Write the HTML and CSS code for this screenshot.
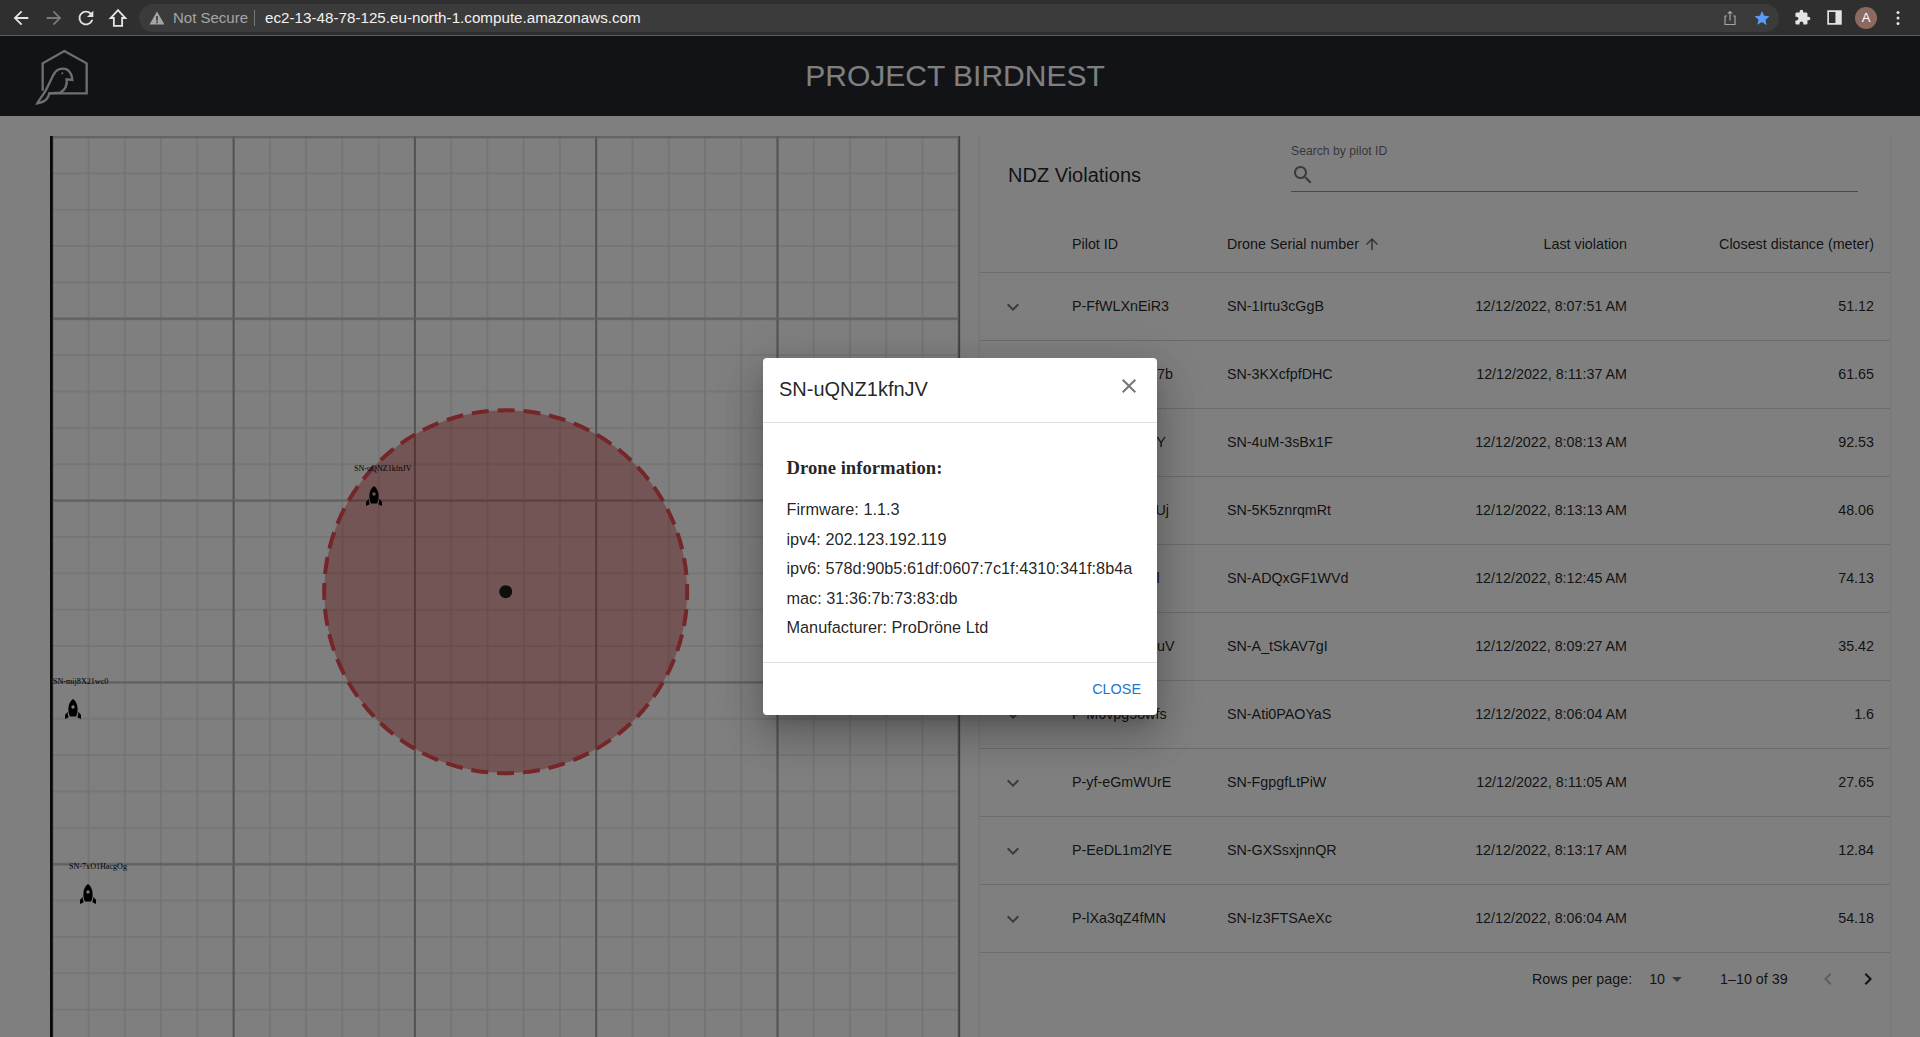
FILE: index.html
```html
<!DOCTYPE html>
<html lang="en">
<head>
  <meta charset="UTF-8">
  <meta name="viewport" content="width=device-width, initial-scale=1.0">
  <title>Project Birdnest</title>
  <link rel="stylesheet" href="styles.css">
</head>
<body>
  <div class="browser">
    <svg class="nav-icon" viewBox="0 0 24 24"><path fill="#e4e4e4" d="M20 11H7.83l5.59-5.59L12 4l-8 8 8 8 1.41-1.41L7.83 13H20v-2z"/></svg>
    <svg class="nav-icon" viewBox="0 0 24 24"><path fill="#7a7a7a" d="M4 11h12.17l-5.59-5.59L12 4l8 8-8 8-1.41-1.41L16.17 13H4v-2z"/></svg>
    <svg class="nav-icon" viewBox="0 0 24 24"><path fill="#e4e4e4" d="M17.65 6.35C16.2 4.9 14.21 4 12 4c-4.42 0-7.99 3.58-7.99 8s3.57 8 7.99 8c3.73 0 6.84-2.55 7.73-6h-2.08c-.82 2.33-3.04 4-5.65 4-3.31 0-6-2.69-6-6s2.69-6 6-6c1.66 0 3.14.69 4.22 1.78L13 11h7V4l-2.35 2.35z"/></svg>
    <svg class="nav-icon home" viewBox="0 0 24 24"><path fill="none" stroke="#e4e4e4" stroke-width="2" d="M12 3.5 4 12h3.5v8.5h9V12H20z"/></svg>
    <div class="address">
      <svg class="warn" viewBox="0 0 16 16"><path fill="#a5a5a5" d="M8 1.5 15.5 14.5H.5z"/><path fill="#3a3a3a" d="M7.2 6h1.6v4.8H7.2zM7.2 11.6h1.6v1.6H7.2z"/></svg>
      <span class="not-secure">Not Secure</span>
      <span class="url">ec2-13-48-78-125.eu-north-1.compute.amazonaws.com</span>
      <svg class="share" viewBox="0 0 16 16"><path fill="none" stroke="#a5a5a5" stroke-width="1.2" d="M5 6H3v8.5h10V6h-2M8 10.5V1.5M5.8 3.6 8 1.5l2.2 2.1"/></svg>
      <svg class="star" viewBox="0 0 24 24"><path fill="#5b9cf6" d="M12 2.5l2.9 6.6 7.1.7-5.4 4.7 1.6 7L12 17.2l-6.2 3.8 1.6-7L2 9.8l7.1-.7z"/></svg>
    </div>
    <svg class="ext puzzle" viewBox="0 0 24 24"><path fill="#e4e4e4" d="M20.5 11H19V7c0-1.1-.9-2-2-2h-4V3.5C13 2.12 11.88 1 10.5 1S8 2.12 8 3.5V5H4c-1.1 0-1.99.9-1.99 2v3.8H3.5c1.49 0 2.7 1.21 2.7 2.7s-1.21 2.7-2.7 2.7H2V20c0 1.1.9 2 2 2h3.8v-1.5c0-1.49 1.21-2.7 2.7-2.7 1.49 0 2.7 1.21 2.7 2.7V22H17c1.1 0 2-.9 2-2v-4h1.5c1.38 0 2.5-1.12 2.5-2.5S21.88 11 20.5 11z"/></svg>
    <svg class="ext panel" viewBox="0 0 16 16"><rect x="1.2" y="1.2" width="13.6" height="13.6" fill="none" stroke="#e4e4e4" stroke-width="1.8"/><rect x="9" y="1" width="6" height="14" fill="#e4e4e4"/></svg>
    <span class="avatar">A</span>
    <svg class="dots" viewBox="0 0 4 16"><circle cx="2" cy="2.5" r="1.5"/><circle cx="2" cy="8" r="1.5"/><circle cx="2" cy="13.5" r="1.5"/></svg>
  </div>

  <div class="app">
    <header class="header">
      <svg class="logo" viewBox="0 0 270 210">
        <path d="M68 152V70L133 33l67 37v90H86"/>
        <path d="M52 190c8-15 18-25 26-40l22-45c8-17 25-23 40-17 10 6 16 17 17 32l-17-2c2 17-5 32-20 40l-32 2c-3 15-10 25-36 30z"/>
        <circle class="logo-eye" cx="127" cy="100" r="3"/>
      </svg>
      <h1>PROJECT BIRDNEST</h1>
    </header>

    <main class="main">
      <section class="map">
        <svg class="radar" width="912" height="901" viewBox="50 136 912 901">
          <defs>
            <pattern id="minor" x="51.3" y="136" width="36.26" height="36.36" patternUnits="userSpaceOnUse">
              <path d="M1 0V36.36" fill="none" stroke="#e6e6e6" stroke-width="1.600"/>
              <path d="M0 1H36.26" fill="none" stroke="#e6e6e6" stroke-width="1.300"/>
            </pattern>
            <pattern id="major" x="51.3" y="135.500" width="181.3" height="181.8" patternUnits="userSpaceOnUse">
              <path d="M1 0V181.8" fill="none" stroke="#808080" stroke-width="1.300"/>
              <path d="M0 1.500H181.3" fill="none" stroke="#bcbcbc" stroke-width="2"/>
            </pattern>
            <symbol id="drone" viewBox="0 0 16 20">
              <path fill-rule="evenodd" d="M8 0c3 2 4.6 6 4.6 10 0 3-.5 6-1.6 7.4H5C3.900 16 3.400 13 3.400 10 3.400 6 5 2 8 0zm0 6.300a1.700 1.700 0 1 0 0 3.400 1.700 1.700 0 0 0 0-3.400z"/>
              <path d="M0 20v-4l2.600-3.200c.1 2.200.5 4.200 1.100 5.400zM16 20v-4l-2.600-3.200c-.1 2.200-.5 4.200-1.100 5.400z"/>
            </symbol>
          </defs>
          <rect x="51" y="136" width="909" height="901" fill="url(#minor)"/>
          <rect x="51" y="136" width="909" height="901" fill="url(#major)"/>
          <line x1="959.500" y1="136" x2="959.500" y2="1037" stroke="#808080" stroke-width="1.300"/>
          <line x1="51.300" y1="136" x2="51.300" y2="1037" stroke="#111" stroke-width="2.800"/>
          <circle cx="505.700" cy="591.700" r="181.500" fill="rgba(189,12,18,.35)" stroke="#e84c50" stroke-width="4" stroke-dasharray="17 8.920" stroke-dashoffset="8.500"/>
          <circle cx="505.700" cy="591.700" r="6.500" fill="#1c1c1c"/>
          <text class="drone-label" x="354" y="471">SN-uQNZ1kfnJV</text>
          <use href="#drone" x="366" y="486" width="16" height="20"/>
          <text class="drone-label" x="53" y="684">SN-mij8X21wc0</text>
          <use href="#drone" x="65" y="699" width="16" height="20"/>
          <text class="drone-label" x="69" y="869">SN-7xO1HacgOg</text>
          <use href="#drone" x="80" y="884" width="16" height="20"/>
        </svg>
      </section>

      <section class="card">
        <div class="toolbar">
          <h2>NDZ Violations</h2>
          <label class="search">
            <span class="search-label">Search by pilot ID</span>
            <span class="search-field">
              <svg class="icon" viewBox="0 0 24 24"><path d="M15.500 14h-.79l-.28-.27C15.410 12.590 16 11.110 16 9.500 16 5.910 13.090 3 9.500 3S3 5.910 3 9.500 5.910 16 9.500 16c1.610 0 3.090-.59 4.230-1.570l.27.28v.79l5 4.990L20.490 19l-4.990-5zm-6 0C7.010 14 5 11.990 5 9.500S7.010 5 9.500 5 14 7.010 14 9.500 11.990 14 9.500 14z"/></svg>
            </span>
          </label>
        </div>

        <table class="violations">
          <colgroup>
            <col class="col-toggle"><col class="col-pilot"><col class="col-serial"><col class="col-time"><col class="col-dist">
          </colgroup>
          <thead>
            <tr>
              <th></th>
              <th>Pilot ID</th>
              <th>Drone Serial number <svg class="sort" viewBox="0 0 24 24"><path d="M4 12l1.410 1.410L11 7.830V20h2V7.830l5.580 5.590L20 12l-8-8-8 8z"/></svg></th>
              <th class="num">Last violation</th>
              <th class="num">Closest distance (meter)</th>
            </tr>
          </thead>
          <tbody>
            <tr><td><svg class="icon" viewBox="0 0 24 24"><path d="M7.410 8.590 12 13.170l4.590-4.580L18 10l-6 6-6-6 1.410-1.410z"/></svg></td><td>P-FfWLXnEiR3</td><td>SN-1Irtu3cGgB</td><td class="num">12/12/2022, 8:07:51 AM</td><td class="num">51.12</td></tr>
            <tr><td><svg class="icon" viewBox="0 0 24 24"><path d="M7.410 8.590 12 13.170l4.590-4.580L18 10l-6 6-6-6 1.410-1.410z"/></svg></td><td>P-Rk2dWneo7b</td><td>SN-3KXcfpfDHC</td><td class="num">12/12/2022, 8:11:37 AM</td><td class="num">61.65</td></tr>
            <tr><td><svg class="icon" viewBox="0 0 24 24"><path d="M7.410 8.590 12 13.170l4.590-4.580L18 10l-6 6-6-6 1.410-1.410z"/></svg></td><td>P-GtaXo9sK-Y</td><td>SN-4uM-3sBx1F</td><td class="num">12/12/2022, 8:08:13 AM</td><td class="num">92.53</td></tr>
            <tr><td><svg class="icon" viewBox="0 0 24 24"><path d="M7.410 8.590 12 13.170l4.590-4.580L18 10l-6 6-6-6 1.410-1.410z"/></svg></td><td>P-vN4bZcEwUj</td><td>SN-5K5znrqmRt</td><td class="num">12/12/2022, 8:13:13 AM</td><td class="num">48.06</td></tr>
            <tr><td><svg class="icon" viewBox="0 0 24 24"><path d="M7.410 8.590 12 13.170l4.590-4.580L18 10l-6 6-6-6 1.410-1.410z"/></svg></td><td>P-qW8sTuLEl</td><td>SN-ADQxGF1WVd</td><td class="num">12/12/2022, 8:12:45 AM</td><td class="num">74.13</td></tr>
            <tr><td><svg class="icon" viewBox="0 0 24 24"><path d="M7.410 8.590 12 13.170l4.590-4.580L18 10l-6 6-6-6 1.410-1.410z"/></svg></td><td>P-oKd3Bm_auV</td><td>SN-A_tSkAV7gI</td><td class="num">12/12/2022, 8:09:27 AM</td><td class="num">35.42</td></tr>
            <tr><td><svg class="icon" viewBox="0 0 24 24"><path d="M7.410 8.590 12 13.170l4.590-4.580L18 10l-6 6-6-6 1.410-1.410z"/></svg></td><td>P-M6vpg5owfs</td><td>SN-Ati0PAOYaS</td><td class="num">12/12/2022, 8:06:04 AM</td><td class="num">1.6</td></tr>
            <tr><td><svg class="icon" viewBox="0 0 24 24"><path d="M7.410 8.590 12 13.170l4.590-4.580L18 10l-6 6-6-6 1.410-1.410z"/></svg></td><td>P-yf-eGmWUrE</td><td>SN-FgpgfLtPiW</td><td class="num">12/12/2022, 8:11:05 AM</td><td class="num">27.65</td></tr>
            <tr><td><svg class="icon" viewBox="0 0 24 24"><path d="M7.410 8.590 12 13.170l4.590-4.580L18 10l-6 6-6-6 1.410-1.410z"/></svg></td><td>P-EeDL1m2lYE</td><td>SN-GXSsxjnnQR</td><td class="num">12/12/2022, 8:13:17 AM</td><td class="num">12.84</td></tr>
            <tr><td><svg class="icon" viewBox="0 0 24 24"><path d="M7.410 8.590 12 13.170l4.590-4.580L18 10l-6 6-6-6 1.410-1.410z"/></svg></td><td>P-lXa3qZ4fMN</td><td>SN-Iz3FTSAeXc</td><td class="num">12/12/2022, 8:06:04 AM</td><td class="num">54.18</td></tr>
          </tbody>
        </table>

        <div class="pager">
          <span>Rows per page:</span>
          <span class="page-size">10</span>
          <svg class="icon drop" viewBox="0 0 24 24"><path d="M7 10l5 5 5-5z"/></svg>
          <span class="page-range">1–10 of 39</span>
          <svg class="icon prev" viewBox="0 0 24 24"><path d="M15.410 16.590 10.830 12l4.580-4.590L14 6l-6 6 6 6 1.410-1.410z"/></svg>
          <svg class="icon next" viewBox="0 0 24 24"><path d="M8.590 16.590 13.170 12 8.590 7.410 10 6l6 6-6 6-1.410-1.410z"/></svg>
        </div>
      </section>
    </main>

    <div class="backdrop">
      <div class="dialog">
        <div class="dialog-title">
          <h2>SN-uQNZ1kfnJV</h2>
          <svg class="close" viewBox="0 0 24 24"><path d="M19 6.410 17.590 5 12 10.590 6.410 5 5 6.410 10.590 12 5 17.590 6.410 19 12 13.410 17.590 19 19 17.590 13.410 12z"/></svg>
        </div>
        <div class="dialog-body">
          <h3>Drone information:</h3>
          <p>Firmware: 1.1.3</p>
          <p>ipv4: 202.123.192.119</p>
          <p>ipv6: 578d:90b5:61df:0607:7c1f:4310:341f:8b4a</p>
          <p>mac: 31:36:7b:73:83:db</p>
          <p>Manufacturer: ProDröne Ltd</p>
        </div>
        <div class="dialog-actions">
          <button type="button">CLOSE</button>
        </div>
      </div>
    </div>
  </div>
</body>
</html>
```

FILE: styles.css
```css
* {
  box-sizing: border-box;
}
body {
  margin: 0;
  height: 1037px;
  overflow: hidden;
  font-family: "Liberation Sans", Arial, sans-serif;
  color: rgba(0, 0, 0, 0.87);
  background-color: #fff;
}

/* browser toolbar */
.browser {
  display: flex;
  align-items: center;
  height: 36px;
  padding: 0 0 0 10px;
  background-color: #2f2f2f;
  border-bottom: 1px solid #5c5c5c;
}
.nav-icon {
  width: 22px;
  height: 22px;
  margin-right: 10.500px;
  flex: none;
}
.home {
  margin-left: -1px;
}
.address {
  display: flex;
  align-items: center;
  width: 1640px;
  height: 28px;
  margin-left: 0;
  padding: 0 0 0 10px;
  border-radius: 14px;
  background-color: #3b3b3b;
}
.warn {
  width: 16px;
  height: 16px;
}
.not-secure {
  margin-left: 8px;
  padding-right: 6px;
  border-right: 1px solid #777;
  font-size: 15px;
  line-height: 16px;
  color: #a5a5a5;
}
.url {
  flex: 1;
  margin-left: 10px;
  font-size: 15.200px;
  color: #f1f1f1;
}
.share {
  width: 16px;
  height: 16px;
}
.star {
  width: 18px;
  height: 18px;
  margin: 0 8px 0 15px;
}
.ext {
  flex: none;
}
.puzzle {
  width: 17px;
  height: 17px;
  margin-left: 15px;
}
.panel {
  width: 15px;
  height: 15px;
  margin-left: 16px;
}
.avatar {
  display: flex;
  align-items: center;
  justify-content: center;
  width: 22px;
  height: 22px;
  margin-left: 13px;
  border-radius: 50%;
  font-size: 13px;
  color: #fff;
  background-color: #8c6a5f;
}
.dots {
  width: 4px;
  height: 16px;
  margin-left: 19px;
  fill: #e4e4e4;
}

/* app */
.app {
  position: relative;
  height: 1001px;
  overflow: hidden;
}
.header {
  display: grid;
  grid-template-columns: 110px 1fr 120px;
  align-items: center;
  height: 80px;
  background-color: #23262f;
}
.logo {
  width: 90px;
  height: 70px;
  margin: -2px 0 0 20px;
  fill: none;
  stroke: #dedede;
  stroke-width: 7;
}
.logo-eye {
  fill: #dedede;
  stroke: none;
}
.header h1 {
  margin: 0;
  font-size: 30px;
  font-weight: 400;
  line-height: 80px;
  text-align: center;
  color: #fff;
}
.main {
  display: flex;
  height: 921px;
}
.map {
  width: 980px;
  padding: 20px 0 0 50px;
  flex: none;
}
.radar {
  display: block;
}
.drone-label {
  font-family: "Liberation Serif", serif;
  font-size: 8.100px;
  fill: #000;
}

/* table card */
.card {
  width: 910px;
  margin-top: 19px;
  background-color: #fff;
  box-shadow: 0 2px 1px -1px rgba(0, 0, 0, 0.2), 0 1px 1px 0 rgba(0, 0, 0, 0.14), 0 1px 3px 0 rgba(0, 0, 0, 0.12);
}
.toolbar {
  display: flex;
  align-items: center;
  height: 82px;
  padding-left: 28px;
}
.toolbar h2 {
  width: 283px;
  margin: 0 0 1px;
  font-size: 20px;
  font-weight: 400;
}
.search {
  display: block;
  align-self: flex-start;
  width: 567px;
  margin-top: 9px;
}
.search-label {
  display: block;
  font-size: 12.200px;
  line-height: 14px;
  color: rgba(0, 0, 0, 0.6);
}
.search-field {
  display: flex;
  align-items: center;
  height: 34px;
  border-bottom: 1px solid rgba(0, 0, 0, 0.42);
}
.icon {
  display: block;
  width: 24px;
  height: 24px;
  fill: rgba(0, 0, 0, 0.54);
}
.violations {
  width: 910px;
  table-layout: fixed;
  border-collapse: separate;
  border-spacing: 0;
  font-size: 14.300px;
}
.col-toggle {
  width: 76px;
}
.col-pilot {
  width: 155px;
}
.col-serial {
  width: 200px;
}
.col-time {
  width: 232px;
}
.col-dist {
  width: 247px;
}
th, td {
  padding: 0 16px 2px;
  text-align: left;
  font-weight: 400;
  border-bottom: 1px solid #d8d8d8;
}
th {
  height: 56px;
}
td {
  height: 68px;
}
td:first-child {
  padding: 0 0 0 21px;
}
.num {
  text-align: right;
}
.sort {
  width: 18px;
  height: 18px;
  margin-left: 0;
  vertical-align: -4px;
  fill: rgba(0, 0, 0, 0.6);
}
.pager {
  display: flex;
  align-items: center;
  height: 52px;
  padding-left: 552px;
  font-size: 14.300px;
}
.page-size {
  margin-left: 17px;
}
.drop {
  margin-left: 0;
}
.page-range {
  margin-left: 31px;
}
.prev {
  margin-left: 28px;
  fill: rgba(0, 0, 0, 0.26);
}
.next {
  margin-left: 16px;
  fill: rgba(0, 0, 0, 0.87);
}

/* modal */
.backdrop {
  position: absolute;
  inset: 0;
  display: flex;
  align-items: center;
  justify-content: center;
  background-color: rgba(0, 0, 0, 0.5);
}
.dialog {
  width: 394px;
  height: 357px;
  border-radius: 4px;
  background-color: #fff;
  box-shadow: 0 11px 15px -7px rgba(0, 0, 0, 0.2), 0 24px 38px 3px rgba(0, 0, 0, 0.14), 0 9px 46px 8px rgba(0, 0, 0, 0.12);
}
.dialog-title {
  display: flex;
  align-items: center;
  justify-content: space-between;
  height: 65px;
  padding: 0 16px;
  border-bottom: 1px solid #e0e0e0;
}
.dialog-title h2 {
  margin: 0 0 2px;
  font-size: 20px;
  font-weight: 400;
}
.close {
  display: block;
  width: 24px;
  height: 24px;
  margin: -8px 0 0 0;
  fill: rgba(0, 0, 0, 0.54);
}
.dialog-body {
  height: 240px;
  padding: 34px 23.500px 0;
  border-bottom: 1px solid #e0e0e0;
  font-size: 16.300px;
}
.dialog-body h3 {
  margin: 0 0 16px;
  font-family: "Liberation Serif", serif;
  font-size: 18.700px;
  line-height: 22px;
}
.dialog-body p {
  margin: 0;
  line-height: 29.500px;
}
.dialog-actions {
  display: flex;
  justify-content: flex-end;
  align-items: center;
  height: 52px;
  padding-right: 16px;
}
.dialog-actions button {
  padding: 0;
  border: none;
  background: none;
  font-family: inherit;
  font-size: 14.400px;
  color: #1976d2;
}
```
